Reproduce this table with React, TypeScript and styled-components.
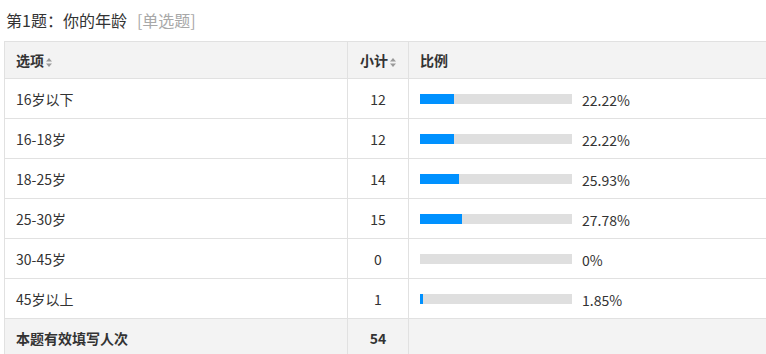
import styled, { createGlobalStyle } from "styled-components";

const GlobalStyle = createGlobalStyle`
  html, body {
    margin: 0;
    padding: 0;
    background: #fff;
    overflow: hidden;
  }
  body {
    font-family: "Noto Sans CJK SC", "Noto Sans", sans-serif;
    color: #333;
  }
`;

const Wrapper = styled.div`
  padding: 8px 0 0 4px;
  width: 800px;
`;

const Title = styled.div`
  font-size: 16px;
  line-height: 24px;
  height: 24px;
  padding-left: 2px;
  margin-bottom: 9px;
  color: #333;
`;

const Type = styled.span`
  color: #a8a8a8;
  margin-left: 10px;
`;

const Table = styled.table`
  border-collapse: collapse;
  width: 790px;
  font-size: 14px;
  table-layout: fixed;
`;

const HeadCell = styled.th<{ $align?: string; $width?: number }>`
  background: #f3f3f3;
  border: 1px solid #e1e1e1;
  height: 36px;
  padding: 0 11px;
  font-weight: bold;
  text-align: ${(p) => p.$align || "left"};
  width: ${(p) => (p.$width ? `${p.$width - 22}px` : "auto")};
  white-space: nowrap;
`;

const Cell = styled.td<{ $align?: string; $foot?: boolean }>`
  border: 1px solid #e1e1e1;
  height: ${(p) => (p.$foot ? "37px" : "39px")};
  padding: 0 11px;
  text-align: ${(p) => p.$align || "left"};
  background: ${(p) => (p.$foot ? "#f3f3f3" : "#fff")};
  font-weight: ${(p) => (p.$foot ? "bold" : "normal")};
  white-space: nowrap;
`;

const BarWrap = styled.div`
  display: flex;
  align-items: center;
  padding-top: 2px;
`;

const Track = styled.div`
  width: 152px;
  height: 10px;
  background: #dfdfdf;
  margin-right: 10px;
  margin-top: -2px;
`;

const Fill = styled.div`
  height: 100%;
  background: #0091ff;
`;

const SortIcon = () => (
  <svg width="6" height="9" viewBox="0 0 6 9" style={{ marginLeft: 2, verticalAlign: "-1px" }}>
    <path d="M3 0 L6 3.6 L0 3.6 Z" fill="#9a9a9a" />
    <path d="M3 9 L6 5.4 L0 5.4 Z" fill="#9a9a9a" />
  </svg>
);

const rows = [
  { label: "16岁以下", count: 12, pct: "22.22%" },
  { label: "16-18岁", count: 12, pct: "22.22%" },
  { label: "18-25岁", count: 14, pct: "25.93%" },
  { label: "25-30岁", count: 15, pct: "27.78%" },
  { label: "30-45岁", count: 0, pct: "0%" },
  { label: "45岁以上", count: 1, pct: "1.85%" },
];

const total = 54;

export default function App() {
  return (
    <Wrapper>
      <GlobalStyle />
      <Title>
        第1题：你的年龄<Type>[单选题]</Type>
      </Title>
      <Table>
        <thead>
          <tr>
            <HeadCell $width={342}>
              选项
              <SortIcon />
            </HeadCell>
            <HeadCell $width={60} $align="center">
              小计
              <SortIcon />
            </HeadCell>
            <HeadCell>比例</HeadCell>
          </tr>
        </thead>
        <tbody>
          {rows.map((r) => (
            <tr key={r.label}>
              <Cell>{r.label}</Cell>
              <Cell $align="center">{r.count}</Cell>
              <Cell>
                <BarWrap>
                  <Track>
                    <Fill style={{ width: `${(r.count / total) * 100}%` }} />
                  </Track>
                  {r.pct}
                </BarWrap>
              </Cell>
            </tr>
          ))}
          <tr>
            <Cell $foot>本题有效填写人次</Cell>
            <Cell $foot $align="center">
              {total}
            </Cell>
            <Cell $foot></Cell>
          </tr>
        </tbody>
      </Table>
    </Wrapper>
  );
}
